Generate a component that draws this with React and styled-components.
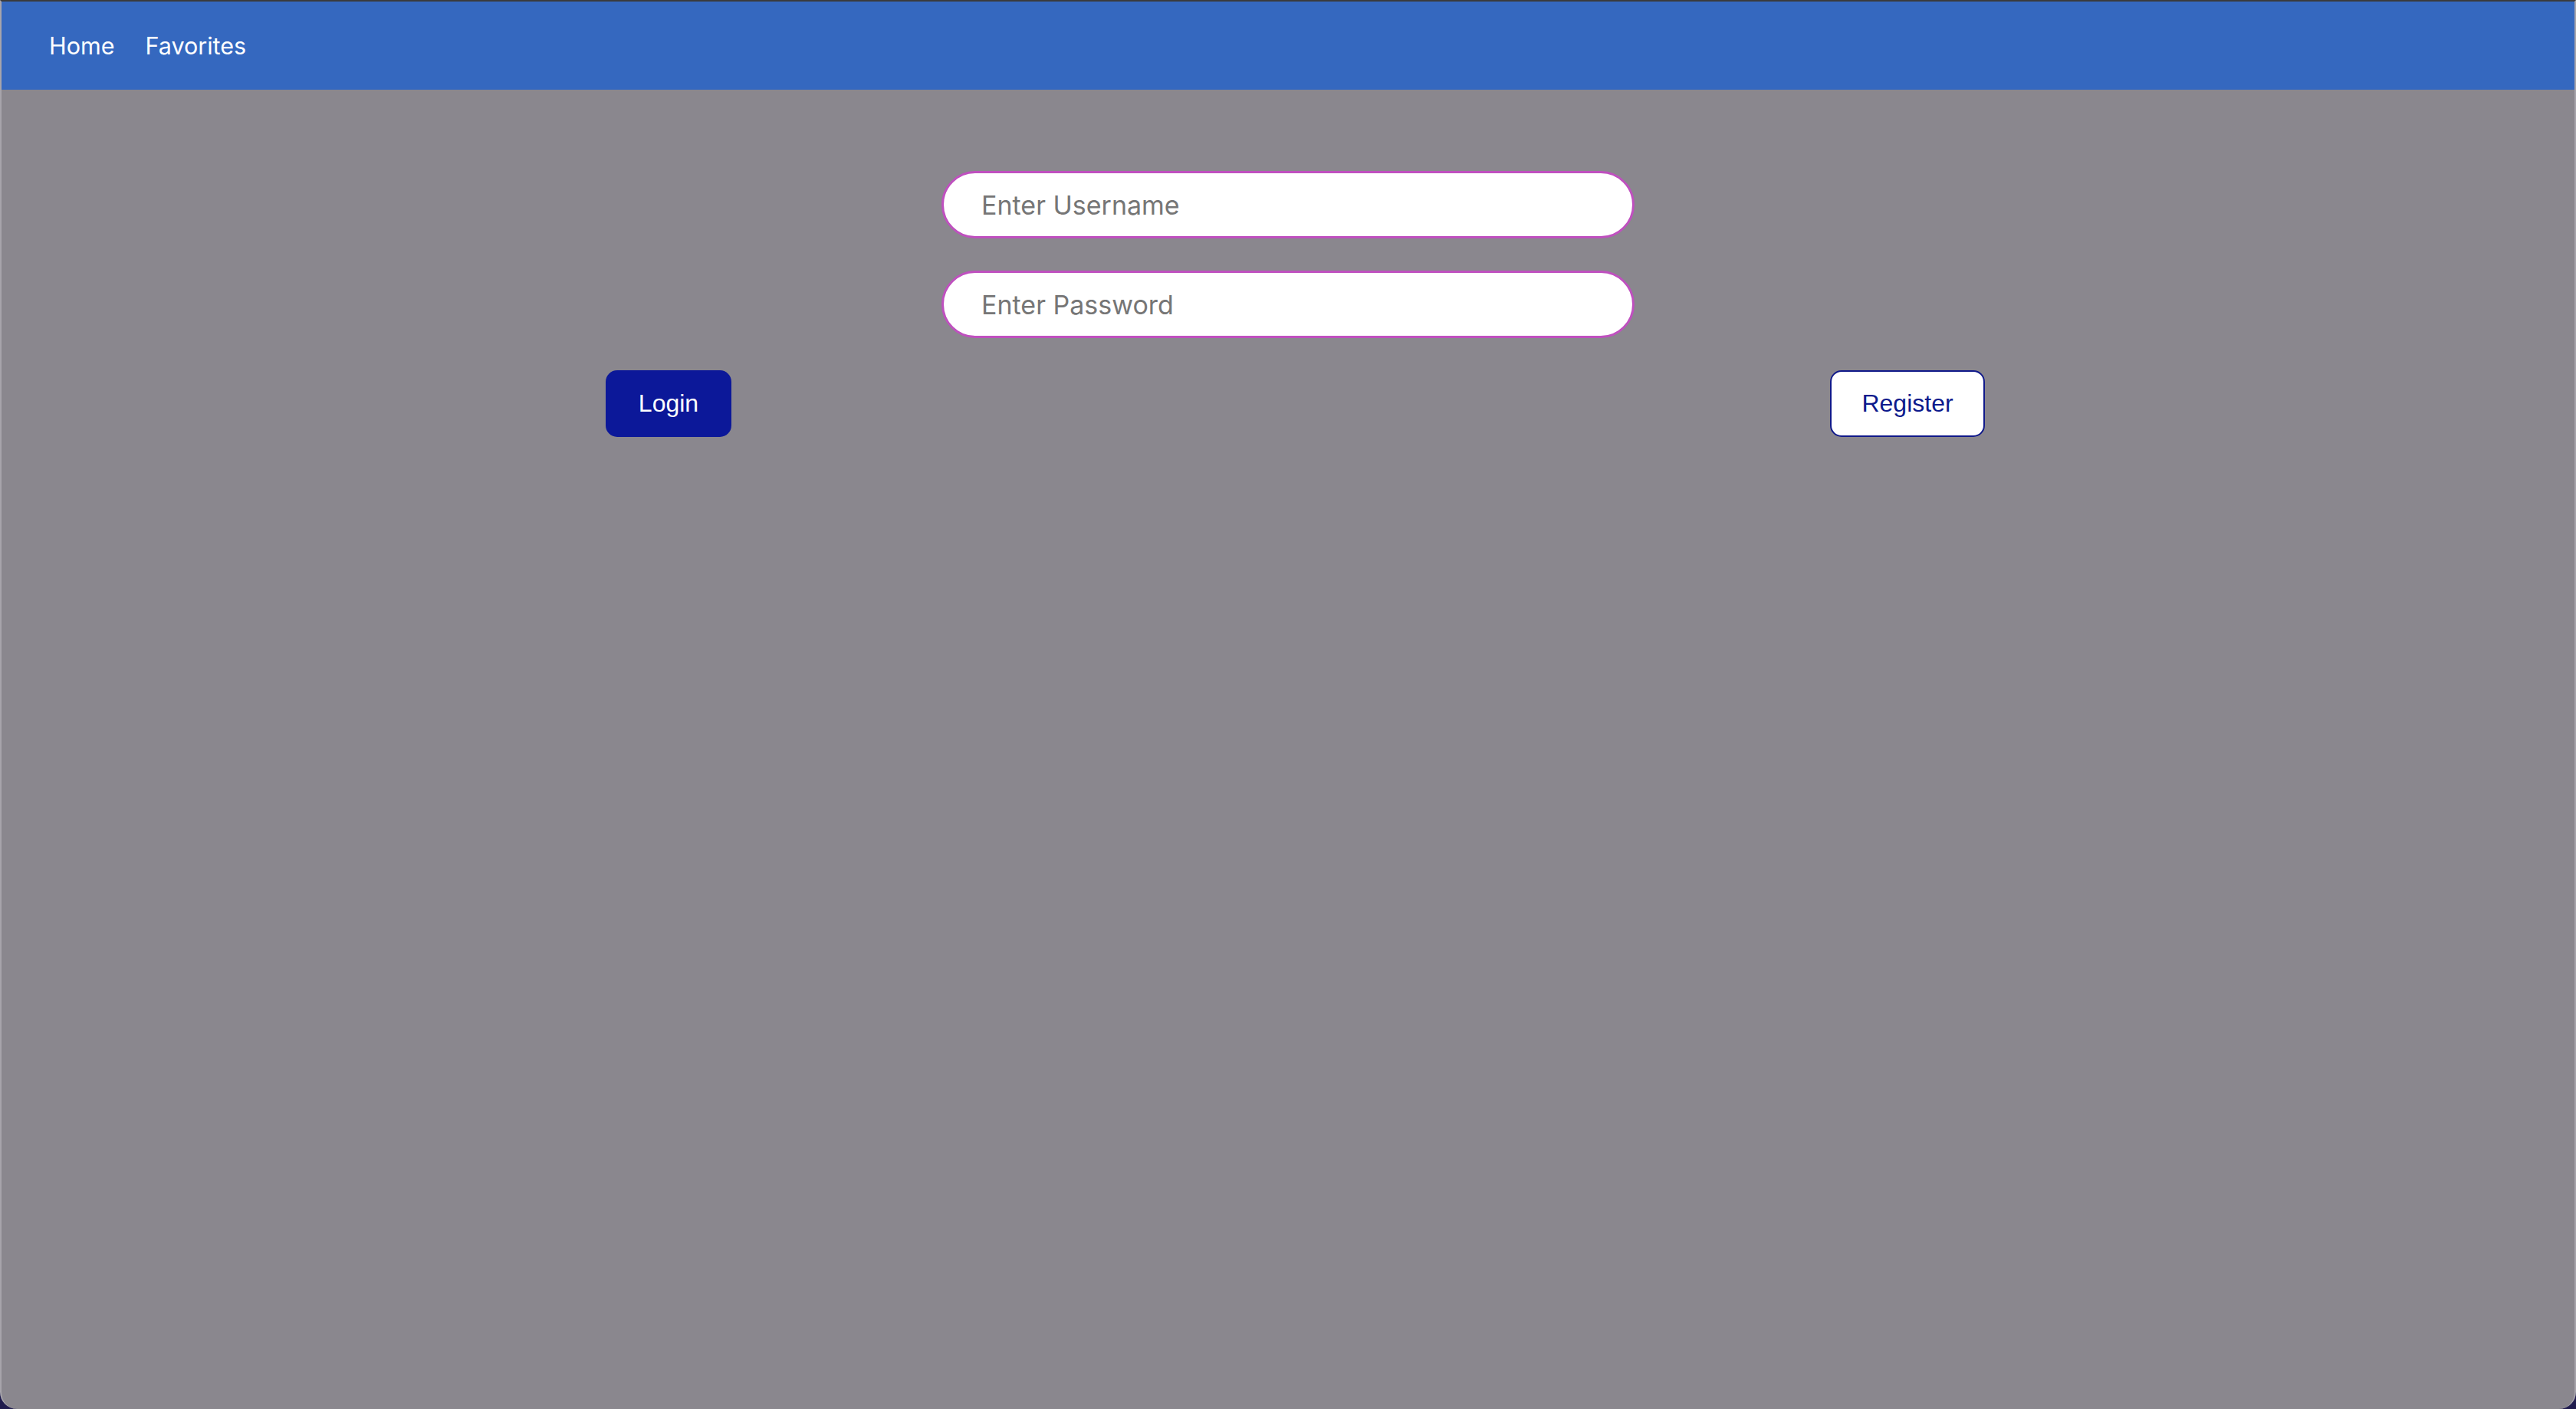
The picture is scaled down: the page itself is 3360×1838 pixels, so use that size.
import React from "react";
import styled, { createGlobalStyle } from "styled-components";

const Global = createGlobalStyle`
  html, body { margin: 0; padding: 0; background: #1f1b4d; }
  * { box-sizing: border-box; }
`;

const Frame = styled.div`
  height: 1838px;
  background: #8a878e;
  border-top: 2px solid #3a3a3c;
  border-left: 2px solid #a7a4ab;
  border-right: 2px solid #a7a4ab;
  border-bottom-left-radius: 22px;
  border-bottom-right-radius: 22px;
  overflow: hidden;
  display: flex;
  flex-direction: column;
`;

const NavBar = styled.nav`
  height: 115px;
  background: #3568bf;
  display: flex;
  align-items: center;
  gap: 40px;
  padding: 0 0 0 62px;
`;

const NavLink = styled.a`
  font-family: Inter, "Noto Sans", sans-serif;
  font-size: 30.5px;
  color: #ffffff;
  text-decoration: none;
`;

const Main = styled.main`
  display: flex;
  flex-direction: column;
  align-items: center;
  padding-top: 106px;
`;

const Field = styled.input`
  width: 904px;
  height: 88px;
  border: 3px solid #bf50bf;
  border-radius: 44px;
  background: #ffffff;
  padding: 0 0 0 49px;
  font-family: Inter, "Noto Sans", sans-serif;
  font-size: 34px;
  color: #222;
  outline: none;
  margin-bottom: ${(p) => p.$gap}px;
  &::placeholder { color: #767676; }
`;

const ButtonRow = styled.div`
  align-self: stretch;
  display: flex;
  justify-content: space-between;
  padding: 0 769px 0 788px;
`;

const Button = styled.button`
  height: 87px;
  width: ${(p) => p.$w}px;
  border-radius: 15px;
  font-family: "Liberation Sans", Arial, sans-serif;
  font-size: 32px;
  cursor: pointer;
  background: ${(p) => (p.$primary ? "#0c1899" : "#ffffff")};
  color: ${(p) => (p.$primary ? "#ffffff" : "#0c1a8c")};
  border: ${(p) => (p.$primary ? "none" : "2.5px solid #10198a")};
`;

export default function App() {
  return (
    <>
      <Global />
      <Frame>
        <NavBar>
          <NavLink href="#">Home</NavLink>
          <NavLink href="#">Favorites</NavLink>
        </NavBar>
        <Main>
          <Field $gap={42} placeholder="Enter Username" />
          <Field $gap={42} type="password" placeholder="Enter Password" />
          <ButtonRow>
            <Button $primary $w={164}>Login</Button>
            <Button $w={202}>Register</Button>
          </ButtonRow>
        </Main>
      </Frame>
    </>
  );
}
